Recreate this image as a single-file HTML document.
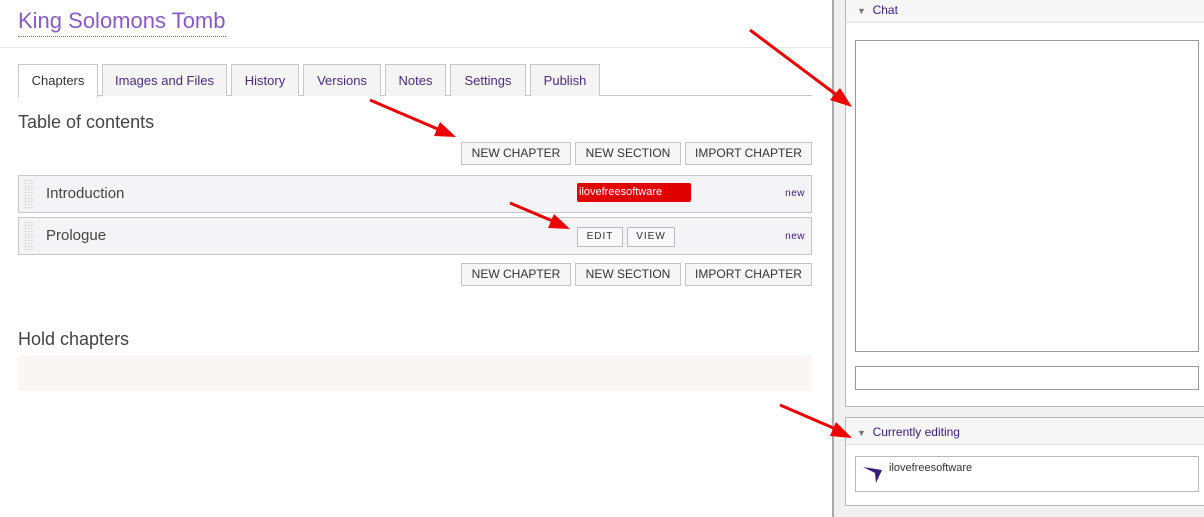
<!DOCTYPE html>
<html><head><style>
body{margin:0;width:1204px;height:517px;overflow:hidden;background:#fff;font-family:"Liberation Sans",sans-serif;position:relative}
.a{position:absolute;box-sizing:border-box}
.tab{position:absolute;top:64px;height:32px;border:1px solid #c8c8c8;border-bottom:none;background:#f4f4f4;color:#4a2a80;font-size:13px;text-align:center;line-height:32px;box-sizing:border-box}
.btn{position:absolute;height:23px;border:1px solid #c4c4c4;background:#f6f6f6;color:#333;font-size:12px;text-align:center;line-height:21px;box-sizing:border-box}
.row{position:absolute;left:18px;width:794px;height:38px;border:1px solid #c6c6c6;background:#f4f4f6;box-sizing:border-box}
.grip{position:absolute;left:5px;top:3px;width:10px;height:30px;background-image:radial-gradient(#ddd 1px,transparent 1px);background-size:3px 3px}
.sb{position:absolute;height:20px;border:1px solid #bbb;background:#f8f8f8;font-size:10px;line-height:18px;text-align:center;color:#333;box-sizing:border-box;letter-spacing:1px}
.new{position:absolute;right:6px;font-size:10px;color:#3a1a70;letter-spacing:.5px}
</style></head><body>
<div class="a" style="left:18px;top:7px;font-size:22px;color:#8a5ac8;border-bottom:1px dotted #8a5ac8;line-height:27px;padding-bottom:2px">King Solomons Tomb</div>
<div class="a" style="left:0;top:47px;width:832px;height:1px;background:#e6e6e6"></div>
<div class="a" style="left:18px;top:95px;width:794px;height:1px;background:#c8c8c8"></div>
<div class="tab" style="left:18px;width:80px;background:#fff;color:#333;height:33px">Chapters</div>
<div class="tab" style="left:102px;width:125px">Images and Files</div>
<div class="tab" style="left:231px;width:68px">History</div>
<div class="tab" style="left:303px;width:78px">Versions</div>
<div class="tab" style="left:385px;width:61px">Notes</div>
<div class="tab" style="left:450px;width:76px">Settings</div>
<div class="tab" style="left:530px;width:70px">Publish</div>
<div class="a" style="left:18px;top:112px;font-size:18px;color:#444">Table of contents</div>
<div class="btn" style="left:461px;top:142px;width:110px">NEW CHAPTER</div>
<div class="btn" style="left:575px;top:142px;width:106px">NEW SECTION</div>
<div class="btn" style="left:685px;top:142px;width:127px">IMPORT CHAPTER</div>
<div class="row" style="top:175px"><div class="grip"></div><div class="a" style="left:27px;top:9px;font-size:15px;color:#444">Introduction</div>
<div class="a" style="left:558px;top:7px;width:114px;height:19px;background:#e00000;border-radius:2px;color:#fff;font-size:11px;line-height:18px;padding-left:2px">ilovefreesoftware</div><div class="new" style="top:12px">new</div></div>
<div class="row" style="top:217px"><div class="grip"></div><div class="a" style="left:27px;top:9px;font-size:15px;color:#444">Prologue</div>
<div class="sb" style="left:558px;top:9px;width:46px">EDIT</div><div class="sb" style="left:608px;top:9px;width:48px">VIEW</div><div class="new" style="top:13px">new</div></div>
<div class="btn" style="left:461px;top:263px;width:110px">NEW CHAPTER</div>
<div class="btn" style="left:575px;top:263px;width:106px">NEW SECTION</div>
<div class="btn" style="left:685px;top:263px;width:127px">IMPORT CHAPTER</div>
<div class="a" style="left:18px;top:329px;font-size:18px;color:#444">Hold chapters</div>
<div class="a" style="left:18px;top:355px;width:794px;height:36px;background:#fbf6f6"></div>
<div class="a" style="left:832px;top:0;width:2px;height:517px;background:#aaa"></div>
<div class="a" style="left:834px;top:0;width:370px;height:517px;background:#f1f1f1"></div>
<div class="a" style="left:845px;top:-1px;width:362px;height:408px;background:#fff;border:1px solid #b8b8b8"></div>
<div class="a" style="left:846px;top:0;width:358px;height:23px;background:#f6f6f6;border-bottom:1px solid #e2e2e2"></div>
<div class="a" style="left:857px;top:3px;font-size:12px;color:#3a1a80"><span style="color:#777;font-size:9px">&#9660;</span>&nbsp; Chat</div>
<div class="a" style="left:855px;top:40px;width:344px;height:312px;border:1px solid #999"></div>
<div class="a" style="left:855px;top:366px;width:344px;height:24px;border:1px solid #999"></div>
<div class="a" style="left:845px;top:417px;width:362px;height:89px;background:#fff;border:1px solid #b8b8b8"></div>
<div class="a" style="left:846px;top:418px;width:358px;height:27px;background:#f6f6f6;border-bottom:1px solid #e2e2e2"></div>
<div class="a" style="left:857px;top:425px;font-size:12px;color:#3a1a80"><span style="color:#777;font-size:9px">&#9660;</span>&nbsp; Currently editing</div>
<div class="a" style="left:855px;top:456px;width:344px;height:36px;border:1px solid #bbb"></div>
<svg class="a" style="left:862px;top:464px" width="22" height="20"><path d="M1 3 L20 6 L14 19 L13 9 Z" fill="#3a1a80"/></svg>
<div class="a" style="left:889px;top:462px;font-size:11px;color:#333">ilovefreesoftware</div>
<svg class="a" style="left:0;top:0" width="1204" height="517">
<g stroke="#e00" stroke-width="3" fill="#e00">
<line x1="750" y1="30" x2="838" y2="96"/><polygon points="852,107 830,100 840,88" stroke="none"/>
<line x1="370" y1="100" x2="440" y2="130"/><polygon points="456,137 434,136 440,122" stroke="none"/>
<line x1="510" y1="203" x2="555" y2="222"/><polygon points="570,229 548,228 554,214" stroke="none"/>
<line x1="780" y1="405" x2="838" y2="430"/><polygon points="852,438 830,436 836,422" stroke="none"/>
</g></svg>
</body></html>
